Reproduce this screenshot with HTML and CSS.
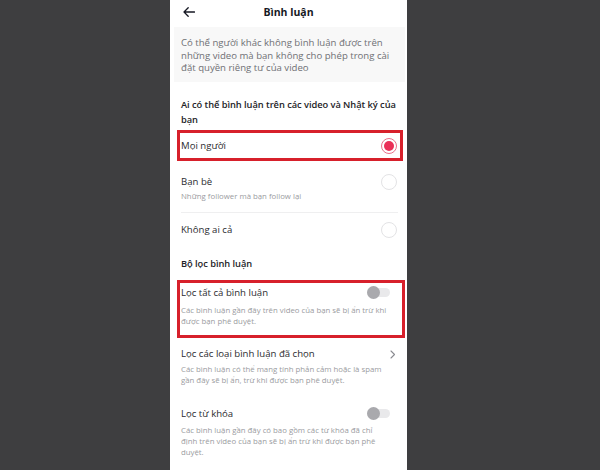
FILE: index.html
```html
<!DOCTYPE html>
<html lang="vi">
<head>
<meta charset="utf-8">
<title>Bình luận</title>
<link rel="stylesheet" href="styles.css">
</head>
<body>
<div class="screen">
  <div class="header">
    <span class="back">
      <svg width="12" height="10" viewBox="0 0 12 10"><path d="M11.5 5H1M5.2 0.8L1 5l4.2 4.2" fill="none" stroke="#161823" stroke-width="1.3" stroke-linecap="round" stroke-linejoin="round"/></svg>
    </span>
    <span class="title">Bình luận</span>
    <span></span>
  </div>

  <div class="info">Có thể người khác không bình luận được trên những video mà bạn không cho phép trong cài đặt quyền riêng tư của video</div>

  <div class="heading h1">Ai có thể bình luận trên các video và Nhật ký của bạn</div>

  <div class="row opt-all marked">
    <span class="label">Mọi người</span>
    <span class="radio on"><span class="dot"></span></span>
  </div>

  <div class="row opt-friends">
    <div class="text">
      <div class="label">Bạn bè</div>
      <div class="sub">Những follower mà bạn follow lại</div>
    </div>
    <span class="radio"></span>
  </div>

  <div class="divider"></div>

  <div class="row opt-none">
    <span class="label">Không ai cả</span>
    <span class="radio"></span>
  </div>

  <div class="heading h2">Bộ lọc bình luận</div>

  <div class="row filter-all marked">
    <div class="text">
      <div class="label">Lọc tất cả bình luận</div>
      <div class="sub">Các bình luận gần đây trên video của bạn sẽ bị ẩn trừ khi được bạn phê duyệt.</div>
    </div>
    <span class="toggle"><span class="knob"></span></span>
  </div>

  <div class="row filter-types">
    <div class="text">
      <div class="label">Lọc các loại bình luận đã chọn</div>
      <div class="sub">Các bình luận có thể mang tính phản cảm hoặc là spam gần đây sẽ bị ẩn, trừ khi được bạn phê duyệt.</div>
    </div>
    <span class="chev">
      <svg width="6" height="9" viewBox="0 0 6 9"><path d="M1 1l3.5 3.5L1 8" fill="none" stroke="#8a8b91" stroke-width="1.1" stroke-linecap="round" stroke-linejoin="round"/></svg>
    </span>
  </div>

  <div class="row filter-words">
    <div class="text">
      <div class="label">Lọc từ khóa</div>
      <div class="sub">Các bình luận gần đây có bao gồm các từ khóa đã chỉ định trên video của bạn sẽ bị ẩn trừ khi được bạn phê duyệt.</div>
    </div>
    <span class="toggle"><span class="knob"></span></span>
  </div>
</div>
</body>
</html>
```

FILE: styles.css
```css
html, body {
  margin: 0;
  padding: 0;
}
body {
  background: #3e3e40;
  width: 600px;
  height: 470px;
  overflow: hidden;
  font-family: "Open Sans", Lato, sans-serif;
  color: #2b2b2f;
}
.screen {
  width: 237px;
  height: 470px;
  margin-left: 170px;
  background: #ffffff;
  display: flex;
  flex-direction: column;
  overflow: hidden;
}
.header {
  height: 24px;
  margin-bottom: 3px;
  display: grid;
  grid-template-columns: 30px 1fr 30px;
  align-items: center;
}
.back {
  display: flex;
  padding-left: 13px;
}
.title {
  text-align: center;
  font-weight: 700;
  font-size: 10.5px;
  color: #161823;
}
.info {
  height: 55px;
  box-sizing: border-box;
  margin: 0 2px 0 4px;
  padding: 10px 8px 0 7px;
  background: #f8f8f8;
  font-size: 9.6px;
  line-height: 12.5px;
  color: #6f7075;
}
.heading {
  margin-left: 11px;
  width: 224px;
  font-weight: 600;
  font-size: 9.3px;
  letter-spacing: -0.05px;
  line-height: 15px;
  color: #222226;
}
.h1 { margin-top: 14.5px; }
.h2 { margin-top: 19px; }
.row {
  display: flex;
  justify-content: space-between;
  align-items: center;
  margin-left: 11px;
  margin-right: 8px;
}
.marked {
  outline: 3px solid #d7202b;
  outline-offset: 1px;
}
.label {
  font-size: 9.6px;
  line-height: 15px;
  color: #2b2b2f;
}
.sub {
  font-size: 7.8px;
  line-height: 11px;
  color: #9a9ba0;
}
.opt-all {
  margin-top: 7.5px;
  height: 23px;
}
.opt-friends {
  margin-top: 17.2px;
  align-items: flex-start;
}
.opt-friends .sub {
  line-height: 15px;
}
.opt-friends .radio {
  margin-top: -0.5px;
}
.divider {
  margin: 7.8px 9px 0 11px;
  height: 1px;
  background: #efeff0;
}
.opt-none {
  margin-top: 9.5px;
  height: 15px;
}
.radio {
  width: 16px;
  height: 16px;
  box-sizing: border-box;
  border: 1px solid #e3e3e5;
  border-radius: 50%;
  margin-right: 2px;
  display: flex;
  align-items: center;
  justify-content: center;
  flex-shrink: 0;
}
.radio.on {
  border: 1px solid #e9718a;
}
.dot {
  width: 10px;
  height: 10px;
  border-radius: 50%;
  background: #ea2f57;
}
.text {
  width: 180px;
}
.filter-all {
  margin-top: 12.5px;
  margin-right: 6px;
  padding: 1.7px 0 6.8px 0;
  align-items: flex-start;
}
.filter-all .text { width: 220px; margin-right: -40px; }
.filter-all .label,
.filter-types .label,
.filter-words .label {
  line-height: 14px;
}
.filter-all .sub { margin-top: 5.5px; }
.filter-all .toggle { margin-right: 11px; margin-top: 0.5px; }
.toggle {
  position: relative;
  width: 23px;
  height: 13px;
  display: flex;
  align-items: center;
  flex-shrink: 0;
}
.toggle::before {
  content: "";
  width: 23px;
  height: 9px;
  border-radius: 5px;
  background: #e9e9eb;
}
.knob {
  position: absolute;
  left: 0;
  top: 0;
  width: 13px;
  height: 13px;
  border-radius: 50%;
  background: #a9a9ad;
}
.filter-types {
  margin-top: 13px;
  align-items: flex-start;
}
.filter-types .text { width: 214px; }
.filter-types .sub { margin-top: 2.8px; }
.chev {
  display: flex;
  margin-top: 3px;
  margin-right: 3px;
}
.filter-words {
  margin-top: 21.2px;
  align-items: flex-start;
}
.filter-words .text { width: 207px; margin-right: -40px; }
.filter-words .sub { margin-top: 4.2px; }
.filter-words .toggle { margin-right: 9px; margin-top: 0.5px; }
```
